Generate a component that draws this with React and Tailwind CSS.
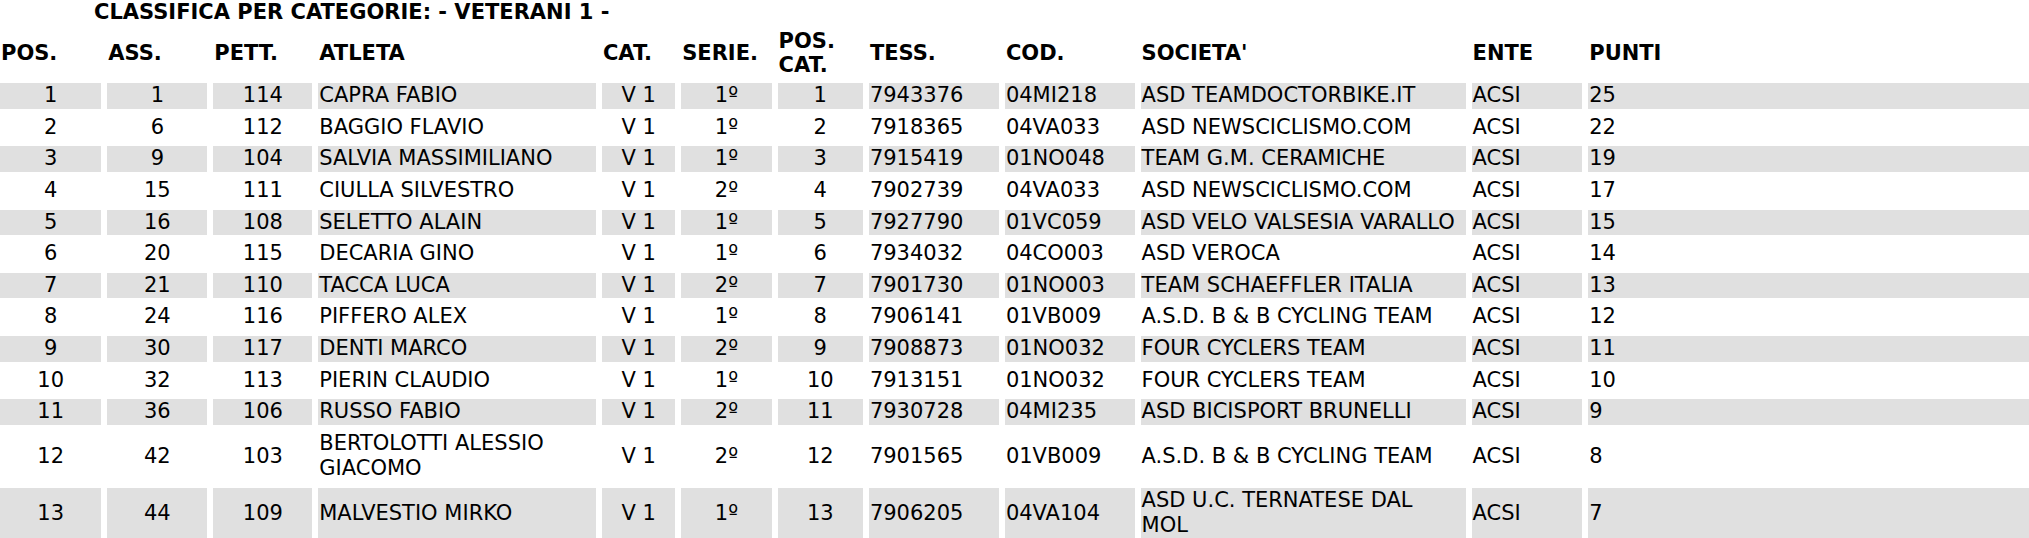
import React from "react";

const cols =
  "grid grid-cols-[101.4px_100.1px_99.1px_277.8px_73.4px_90.5px_85.4px_130.1px_129.8px_325.1px_110.8px_1fr] gap-x-[5.9px]";

const headers = ["POS.", "ASS.", "PETT.", "ATLETA", "CAT.", "SERIE.", "POS. CAT.", "TESS.", "COD.", "SOCIETA'", "ENTE", "PUNTI"];

// columns with centred content
const centred = [0, 1, 2, 4, 5, 6];

const rows = [
  ["1", "1", "114", "CAPRA FABIO", "V 1", "1º", "1", "7943376", "04MI218", "ASD TEAMDOCTORBIKE.IT", "ACSI", "25"],
  ["2", "6", "112", "BAGGIO FLAVIO", "V 1", "1º", "2", "7918365", "04VA033", "ASD NEWSCICLISMO.COM", "ACSI", "22"],
  ["3", "9", "104", "SALVIA MASSIMILIANO", "V 1", "1º", "3", "7915419", "01NO048", "TEAM G.M. CERAMICHE", "ACSI", "19"],
  ["4", "15", "111", "CIULLA SILVESTRO", "V 1", "2º", "4", "7902739", "04VA033", "ASD NEWSCICLISMO.COM", "ACSI", "17"],
  ["5", "16", "108", "SELETTO ALAIN", "V 1", "1º", "5", "7927790", "01VC059", "ASD VELO VALSESIA VARALLO", "ACSI", "15"],
  ["6", "20", "115", "DECARIA GINO", "V 1", "1º", "6", "7934032", "04CO003", "ASD VEROCA", "ACSI", "14"],
  ["7", "21", "110", "TACCA LUCA", "V 1", "2º", "7", "7901730", "01NO003", "TEAM SCHAEFFLER ITALIA", "ACSI", "13"],
  ["8", "24", "116", "PIFFERO ALEX", "V 1", "1º", "8", "7906141", "01VB009", "A.S.D. B & B CYCLING TEAM", "ACSI", "12"],
  ["9", "30", "117", "DENTI MARCO", "V 1", "2º", "9", "7908873", "01NO032", "FOUR CYCLERS TEAM", "ACSI", "11"],
  ["10", "32", "113", "PIERIN CLAUDIO", "V 1", "1º", "10", "7913151", "01NO032", "FOUR CYCLERS TEAM", "ACSI", "10"],
  ["11", "36", "106", "RUSSO FABIO", "V 1", "2º", "11", "7930728", "04MI235", "ASD BICISPORT BRUNELLI", "ACSI", "9"],
  ["12", "42", "103", "BERTOLOTTI ALESSIO GIACOMO", "V 1", "2º", "12", "7901565", "01VB009", "A.S.D. B & B CYCLING TEAM", "ACSI", "8"],
  ["13", "44", "109", "MALVESTIO MIRKO", "V 1", "1º", "13", "7906205", "04VA104", "ASD U.C. TERNATESE DAL MOL", "ACSI", "7"],
];

const App = () => {
  return (
    <div className="min-h-screen bg-white text-black font-['DejaVu_Sans',Verdana,sans-serif] text-[21px]">
      <div className="pl-[94px] pt-[2.5px] font-bold leading-[19px]">CLASSIFICA PER CATEGORIE: - VETERANI 1 -</div>

      <div className={`${cols} mt-[7.1px] h-[48.6px] items-center font-bold leading-[24.3px]`}>
        {headers.map((h) => (
          <div key={h} className="pl-[1px]">{h}</div>
        ))}
      </div>

      <div className={`${cols} mt-[6.1px] gap-y-[6.1px] leading-[25.5px]`}>
        {rows.map((row, i) => (
          <React.Fragment key={i}>
            {row.map((cell, j) => (
              <div
                key={j}
                className={
                  "flex items-center " +
                  (i % 2 === 0 ? "bg-[#e0e0e0] " : "") +
                  (centred.includes(j) ? "justify-center text-center" : "pl-[1px] pr-[3px]")
                }
              >
                {cell}
              </div>
            ))}
          </React.Fragment>
        ))}
      </div>
    </div>
  );
};

export default App;
